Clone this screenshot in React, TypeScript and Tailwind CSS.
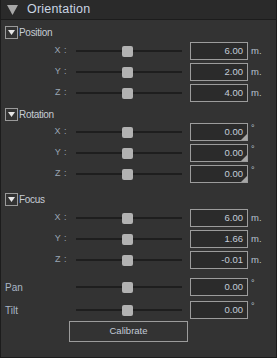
import React from 'react';

const FONT = { fontFamily: '"Liberation Sans", Arial, sans-serif' };

type RowProps = {
  label: string;
  value: string;
  unit: string;
  grip?: boolean;
  side?: boolean;
  className?: string;
};

const Row: React.FC<RowProps> = ({ label, value, unit, grip, side, className }) => (
  <div className={`flex items-center h-[18px] ${className ?? ''}`}>
    {side ? (
      <div className="w-[67px] pl-[4px] text-[10px] text-[#a9b6c6]">{label}</div>
    ) : (
      <div className="w-[67px] text-right pr-[1px] text-[9px] text-[#9aa6b4] tracking-[0.5px]">{label}</div>
    )}
    {/* slider */}
    <div className="relative ml-[8px] w-[106px] h-[11px] flex items-center">
      <div className="w-full h-[2px] bg-[#1e1e1e]" />
      <div className="absolute left-[46px] top-0 w-[11px] h-[11px] rounded-[2px] bg-[#b2b2b2]" />
    </div>
    {/* input */}
    <div className="relative ml-[8px] w-[58px] h-[18px] border border-[#9c9c9c] bg-[#2b2b2b] flex items-center justify-end pr-[4px] text-[9.5px] text-[#c4ccd8]">
      {value}
      {grip && (
        <svg className="absolute right-0 bottom-0" width="6" height="6" viewBox="0 0 6 6">
          <polygon points="6,0 6,6 0,6" fill="#a6a6a6" />
        </svg>
      )}
    </div>
    <div className={`ml-[3px] text-[#b8c2cf] ${unit === '°' ? 'text-[9px] self-start -mt-[1px]' : 'text-[9.5px]'}`}>{unit}</div>
  </div>
);

const Header: React.FC<{ title: string; className?: string }> = ({ title, className }) => (
  <div className={`flex items-center h-[13px] ${className ?? ''}`}>
    <div className="ml-[4px] w-[13px] h-[13px] border border-[#9a9a9a] flex items-center justify-center">
      <svg width="7" height="5" viewBox="0 0 7 5">
        <polygon points="0,0 7,0 3.5,5" fill="#e6e6e6" />
      </svg>
    </div>
    <div className="ml-[1px] text-[10px] text-[#c6ccd4] tracking-[-0.3px]">{title}</div>
  </div>
);

export default function App() {
  return (
    <div className="w-[277px] h-[358px] bg-[#333333] border-x border-b border-[#1c1c1c] flex flex-col" style={FONT}>
      {/* Title */}
      <div className="h-[20px] bg-[#2a2a2a] border-b border-[#1c1c1c] flex items-center shrink-0">
        <svg className="ml-[6px]" width="11" height="10" viewBox="0 0 11 10">
          <polygon points="0,0 11,0 5.5,10" fill="#a8a8a8" />
        </svg>
        <div className="ml-[9px] text-[12.5px] text-[#c9d4e2] tracking-[0.2px]">Orientation</div>
      </div>

      <Header title="Position" className="mt-[6px]" />
      <div className="flex flex-col gap-[3px] mt-[3px]">
        <Row label="X :" value="6.00" unit="m." />
        <Row label="Y :" value="2.00" unit="m." />
        <Row label="Z :" value="4.00" unit="m." />
      </div>

      <Header title="Rotation" className="mt-[6px]" />
      <div className="flex flex-col gap-[3px] mt-[2px]">
        <Row label="X :" value="0.00" unit="°" grip />
        <Row label="Y :" value="0.00" unit="°" grip />
        <Row label="Z :" value="0.00" unit="°" grip />
      </div>

      <Header title="Focus" className="mt-[10px]" />
      <div className="flex flex-col gap-[3px] mt-[3px]">
        <Row label="X :" value="6.00" unit="m." />
        <Row label="Y :" value="1.66" unit="m." />
        <Row label="Z :" value="-0.01" unit="m." />
      </div>

      <div className="flex flex-col gap-[5px] mt-[9px]">
        <Row label="Pan" value="0.00" unit="°" side />
        <Row label="Tilt" value="0.00" unit="°" side />
      </div>

      <div className="mt-[2px] ml-[68px] w-[119px] h-[21px] border border-[#9c9c9c] flex items-center justify-center text-[9.5px] text-[#c2cad6]">
        Calibrate
      </div>
    </div>
  );
}
